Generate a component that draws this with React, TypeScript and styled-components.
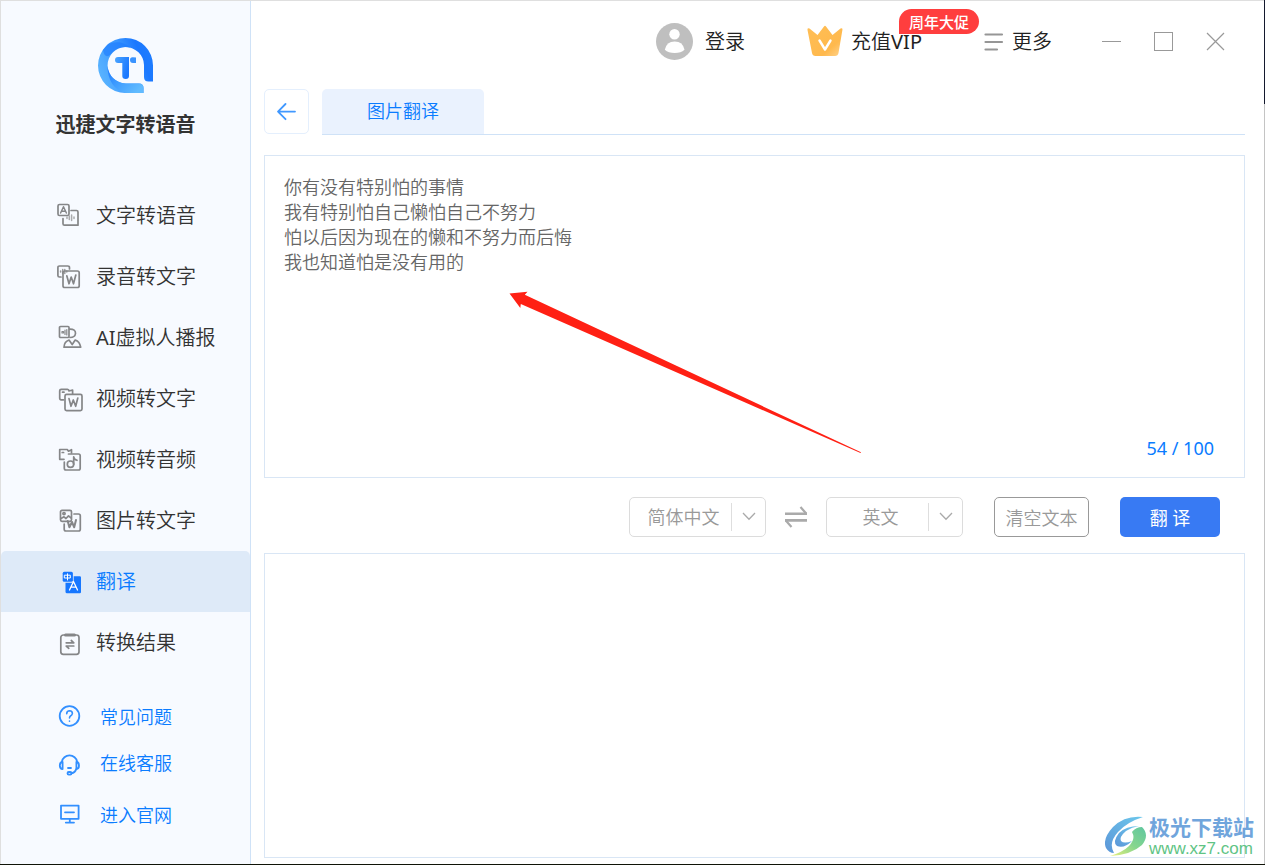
import React from "react";
import styled, { createGlobalStyle, css } from "styled-components";

const GlobalStyle = createGlobalStyle`
  *, *::before, *::after { box-sizing: border-box; }
  body { margin: 0; background: #fff; }
  body, button, select, textarea {
    font-family: "Noto Sans", "Noto Sans CJK SC", sans-serif;
    font-weight: 350;
  }
  button { padding: 0; border: 0; background: none; cursor: pointer; }
  svg { display: block; flex: none; }
`;

/* Window frame: a one pixel edge shows round the sidebar and the content. */
const Frame = styled.div`
  position: relative;
  display: flex;
  min-height: 100vh;
  padding: 1px;
  background:
    linear-gradient(#dfdfdf, #dfdfdf) left top / calc(100% - 1px) 1px no-repeat,
    linear-gradient(#dfdfdf, #dfdfdf) left top / 1px calc(100% - 1px) no-repeat,
    linear-gradient(#14192e 104px, #c4c4c4 104px) right top / 1px calc(100% - 1px) no-repeat,
    #101408;
`;

const Sidebar = styled.aside`
  flex: none;
  width: 250px;
  display: flex;
  flex-direction: column;
  border-right: 1px solid #cfe2f7;
  background: #f7faff;
`;

const Brand = styled.div`
  display: flex;
  flex-direction: column;
  align-items: center;
  gap: 17px;
  height: 184px;
  padding-top: 37px;
`;

const BrandName = styled.h1`
  margin: 0;
  font-size: 20px;
  line-height: 30px;
  font-weight: 700;
  color: #333;
`;

const NavItem = styled.button<{ $active?: boolean }>`
  display: flex;
  align-items: center;
  gap: 13px;
  width: 100%;
  height: 61px;
  padding-left: 56px;
  font-size: 20px;
  line-height: 30px;
  color: #333;
  ${(p) =>
    p.$active &&
    css`
      border-radius: 5px 5px 0 0;
      background: #deeaf8;
      color: #0a7cff;
    `}
`;

const Links = styled.div`
  display: grid;
  grid-template-rows: 46px 46px 58px;
  margin-top: 21px;
`;

const SideLink = styled.a`
  display: flex;
  align-items: center;
  gap: 17px;
  padding-left: 56px;
  font-size: 18px;
  line-height: 26px;
  color: #0a7cff;
  text-decoration: none;
`;

const Main = styled.main`
  flex: 1;
  min-width: 0;
  display: flex;
  flex-direction: column;
  background: #fff;
`;

const Header = styled.header`
  display: flex;
  align-items: center;
  justify-content: flex-end;
  gap: 62px;
  height: 82px;
  padding-right: 38px;
`;

const HeaderButton = styled.button<{ $gap: number }>`
  position: relative;
  display: flex;
  align-items: center;
  gap: ${(p) => p.$gap}px;
  font-size: 20px;
  line-height: 30px;
  color: #222;
`;

const Latin = styled.span`
  font-weight: 400;
`;

const Badge = styled.span`
  position: absolute;
  left: 92px;
  bottom: 25px;
  width: 80px;
  height: 25px;
  border-radius: 13px 13px 13px 0;
  background: #ff3e3e;
  color: #fff;
  font-size: 15px;
  font-weight: 500;
  line-height: 26px;
  text-align: center;
  white-space: nowrap;
`;

const WindowButtons = styled.div`
  display: flex;
  gap: 32px;
  margin-left: -12px;
`;

const TabBar = styled.div`
  display: flex;
  gap: 13px;
  margin: 6px 19px 0 13px;
`;

const BackButton = styled.button`
  display: grid;
  place-items: center;
  width: 45px;
  height: 45px;
  border: 1px solid #e4effd;
  border-radius: 5px;
`;

const TabTrack = styled.div`
  flex: 1;
  border-bottom: 1px solid #cfe2f7;
`;

const Tab = styled.button`
  width: 162px;
  height: 45px;
  padding-bottom: 3px;
  border-radius: 5px 5px 0 0;
  background: #eaf2fe;
  color: #0a7cff;
  font-size: 18px;
`;

const panel = css`
  margin: 0 19px 0 13px;
  border: 1px solid #d9e6f5;
`;

const SourcePanel = styled.section`
  ${panel}
  position: relative;
  display: flex;
  flex-direction: column;
  height: 323px;
  margin-top: 20px;
  padding: 19px 30px 16px 19px;
`;

const TextBox = styled.textarea`
  flex: 1;
  width: 100%;
  padding: 0;
  border: 0;
  outline: 0;
  resize: none;
  background: transparent;
  font-size: 18px;
  line-height: 25px;
  color: #666;
`;

const Counter = styled.output`
  align-self: flex-end;
  font-size: 18px;
  line-height: 26px;
  font-weight: 400;
  color: #0a7cff;
`;

const Arrow = styled.svg`
  position: absolute;
  left: 244px;
  top: 134px;
  pointer-events: none;
`;

const ResultPanel = styled.section`
  ${panel}
  flex: 1;
  display: flex;
  min-height: 160px;
  margin-bottom: 6px;
  padding: 19px;
`;

const Controls = styled.div`
  display: flex;
  align-items: center;
  justify-content: flex-end;
  height: 75px;
  padding: 2px 44px 0 13px;
`;

const SelectWrap = styled.div`
  display: grid;
  grid-template-columns: 102px 34px;
  align-items: center;
  width: 137px;
  height: 40px;
`;

const Select = styled.select`
  grid-area: 1 / 1 / 2 / 3;
  width: 137px;
  height: 40px;
  padding: 0 28px 0 0;
  border: 1px solid #dcdcdc;
  border-radius: 5px;
  appearance: none;
  background: #fff;
  color: #999;
  font-size: 18px;
  text-align: center;
  text-align-last: center;
`;

const SelectMark = styled.span`
  grid-area: 1 / 2 / 2 / 3;
  display: grid;
  place-items: center;
  height: 28px;
  border-left: 1px solid #dedede;
  pointer-events: none;
`;

const SwapButton = styled.button`
  margin: 0 19px;
`;

const ClearButton = styled.button`
  width: 95px;
  height: 40px;
  margin: 0 31px;
  border: 1px solid #999;
  border-radius: 5px;
  color: #999;
  font-size: 18px;
`;

const TranslateButton = styled.button`
  width: 100px;
  height: 40px;
  border-radius: 5px;
  background: #387af3;
  color: #fff;
  font-size: 18px;
  font-weight: 400;
`;

const SiteMark = styled.div`
  position: absolute;
  right: 11px;
  bottom: 7px;
  display: flex;
  align-items: center;
  gap: 2px;
`;

const SiteName = styled.div`
  color: #70a5dc;
  font-size: 21px;
  line-height: 26px;
  font-weight: 700;
`;

const SiteUrl = styled.div`
  color: #5fc485;
  font-family: "Liberation Sans", sans-serif;
  font-size: 17px;
  line-height: 18px;
  font-weight: 400;
`;

const NavSvg = ({ children, active }: { children: React.ReactNode; active?: boolean }) => (
  <svg
    width="26"
    height="26"
    viewBox="0 0 26 26"
    fill="none"
    stroke={active ? "#fff" : "#858688"}
    strokeWidth="1.7"
    strokeLinecap="round"
    strokeLinejoin="round"
    aria-hidden="true"
  >
    {children}
  </svg>
);

const icons = {
  textToVoice: (
    <NavSvg>
      <rect x="1" y="1.5" width="11" height="11" rx="1.5" />
      <path d="M3.6 10 6.5 3.8 9.4 10M4.7 8.2H8.2" strokeWidth="1.5" />
      <path d="M14 7.5H19.5Q21 7.5 21 9V22.2H7.5Q6 22.2 6 20.7V15.5" />
      <path d="M10 14V15.5M12.3 13V16.5M14.6 12V17.5M17 14V15.5" strokeWidth="1.5" stroke="#a9aaac" />
    </NavSvg>
  ),
  voiceToText: (
    <NavSvg>
      <path d="M12.5 5V3.7Q12.5 2 10.8 2H2.5Q.9 2 .9 3.7V11.5Q.9 13 2.5 13H4" />
      <path d="M3.6 7V8M5.7 5.4V9.6M7.8 5.4V9.6M9.8 7V8" strokeWidth="1.5" stroke="#999a9c" />
      <rect x="6" y="7" width="16.2" height="16.5" rx="1.8" />
      <path d="M9.8 11.8 12 19.8 14.2 13 16.5 19.8 18.8 11" />
    </NavSvg>
  ),
  presenter: (
    <NavSvg>
      <rect x="2.5" y="1.5" width="9.5" height="11" rx="1" />
      <path d="M5 6.5H6.5V8H5ZM8 5V9.5M9.8 4.5V10" strokeWidth="1.2" />
      <path d="M12.5 4.2Q18.8 4 18.5 8.5 18 12.5 13 12.5" />
      <path d="M7 22.2Q7.3 16.5 12 15L15.2 19.5 18.2 15Q22.7 16.5 23.7 22.2Z" />
    </NavSvg>
  ),
  videoToText: (
    <NavSvg>
      <path d="M6.5 13.8H4.2Q2.7 13.8 2.7 12.3V4.8Q2.7 3.3 4.2 3.3H10.5Q12 3.3 12 5L15.6 4V8" />
      <path d="M5.5 6.2H7" />
      <rect x="8" y="8.3" width="17" height="16.3" rx="1.6" />
      <path d="M12 12.6 14 20.3 16.3 14 18.7 20.3 20.8 12" />
    </NavSvg>
  ),
  videoToAudio: (
    <NavSvg>
      <path d="M7 12.3H2.7V2.5H10.3L11.5 4.2 14.5 2.7V6" />
      <path d="M5.2 5.5H6.6" />
      <path d="M11.5 7H21.5Q23.2 7 23.2 8.7V21.3Q23.2 23 21.5 23H9Q7.3 23 7.3 21.3V15" />
      <circle cx="13.5" cy="17.2" r="3.2" />
      <path d="M16.7 17.2V9.8Q17 12.5 20 13.3" />
    </NavSvg>
  ),
  imageToText: (
    <NavSvg>
      <rect x="3.5" y="2.3" width="11" height="11" rx="1.5" />
      <circle cx="7" cy="5.6" r="1.1" />
      <path d="M4 10.5 7 8.8 9 10.5 11.5 7.8 14.2 10" />
      <path d="M17 6H21.5Q23.3 6 23.3 7.8V21.3Q23.3 23 21.5 23H9Q7.2 23 7.2 21.3V16" />
      <path d="M10.7 13 12.4 19.3 15 14 17.2 19.3 19 12" strokeWidth="2" />
    </NavSvg>
  ),
  translate: (
    <NavSvg active>
      <rect x="5.7" y="2.7" width="10.2" height="10" rx="1.5" fill="#1677ff" stroke="none" />
      <path d="M10.5 4.8V11M7.7 6.2H13.3V9H7.7Z" strokeWidth="1" />
      <path d="M16.7 7.2H22.8Q24 7.2 24 8.4V23Q24 24.2 22.8 24.2H10Q8.5 24.2 8.5 22.7V13.8H15Q16.7 13.8 16.7 12Z" fill="#1677ff" stroke="none" />
      <path d="M12.5 21 16.5 12.5 20.5 21M14 18.2H19" strokeWidth="1.3" />
    </NavSvg>
  ),
  results: (
    <NavSvg>
      <rect x="3.8" y="5" width="18.2" height="19.3" rx="2.5" />
      <path d="M8.5 5H17.5" strokeWidth="3" />
      <path d="M9.2 12.8H16.8L14.3 10.5M16.8 16H9.2L11.8 18.3" />
    </NavSvg>
  ),
};

const LinkSvg = ({ children }: { children: React.ReactNode }) => (
  <svg width="26" height="26" viewBox="0 0 26 26" fill="none" stroke="#328fff" strokeWidth="1.8" strokeLinecap="round" strokeLinejoin="round" aria-hidden="true">
    {children}
  </svg>
);

const navItems = [
  { label: "文字转语音", icon: icons.textToVoice },
  { label: "录音转文字", icon: icons.voiceToText },
  { latin: "AI", label: "虚拟人播报", icon: icons.presenter },
  { label: "视频转文字", icon: icons.videoToText },
  { label: "视频转音频", icon: icons.videoToAudio },
  { label: "图片转文字", icon: icons.imageToText },
  { label: "翻译", icon: icons.translate, active: true },
  { label: "转换结果", icon: icons.results },
];

const sideLinks = [
  {
    label: "常见问题",
    icon: (
      <LinkSvg>
        <circle cx="12.5" cy="12" r="9.8" />
        <path d="M9.7 9.7Q9.8 6.8 12.6 6.8 15.4 7 15.4 9.5 15.2 11 13.5 12 12.5 12.7 12.5 14M12.5 17V17.2" strokeWidth="1.6" />
      </LinkSvg>
    ),
  },
  {
    label: "在线客服",
    icon: (
      <LinkSvg>
        <path d="M4.8 12A7.8 7.8 0 0 1 20.2 12" />
        <path d="M5.6 12V19Q2.8 19 2.8 15.5 2.8 12 5.6 12ZM19.4 12V19Q22 19 22 15.5 22 12 19.4 12Z" />
        <path d="M19.3 19Q18 22.8 14.5 23.4M11 18H14" />
        <rect x="10.5" y="22" width="4" height="2.6" rx="1.3" />
      </LinkSvg>
    ),
  },
  {
    label: "进入官网",
    icon: (
      <LinkSvg>
        <path d="M4 3.6H21.6V16.8H4ZM8 10.3H17M12.8 16.8V20M8.8 20.6H17" />
      </LinkSvg>
    ),
  },
];

const Logo = () => (
  <svg width="55" height="55" viewBox="0 0 55 55" aria-hidden="true">
    <defs>
      <linearGradient id="ring" x1="0" y1=".7" x2="1" y2=".3">
        <stop offset="0" stopColor="#5bb5ff" />
        <stop offset=".5" stopColor="#3b97ff" />
        <stop offset=".8" stopColor="#1b78ff" />
        <stop offset="1" stopColor="#1f7dff" />
      </linearGradient>
      <linearGradient id="tail" x1="0" y1="0" x2="1" y2=".7">
        <stop offset="0" stopColor="#1b78ff" />
        <stop offset=".45" stopColor="#3d9bff" />
        <stop offset="1" stopColor="#61bbff" />
      </linearGradient>
      <linearGradient id="cap" x1="0" y1="0" x2="1" y2=".5">
        <stop offset="0" stopColor="#4aa5ff" />
        <stop offset="1" stopColor="#1b78ff" />
      </linearGradient>
    </defs>
    <path d="M55 27.5A27.5 27.5 0 1 0 27.5 55H45.5V50Q45.5 45.5 41 45.5H28A18.2 18.2 0 1 1 46 27V39Q46 43.5 50.5 43.5H55Z" fill="url(#ring)" />
    <path d="M9.4 28Q10 50 27.5 55H45.5V50Q45.5 45.5 41 45.5H28Q12 44 9.4 28Z" fill="url(#tail)" />
    <path d="M10 6Q23 1 33 10.2 21 6 13 16 7 22 5 12Z" fill="#1f7dff" opacity=".65" />
    <path d="M20 19H31V38Q31 41 27.7 41 24.3 41 24.3 38V25H20Q17 25 17 22T20 19Z" fill="url(#cap)" />
    <path d="M38 19.5V25H35Q32 25 32 22T35 19.3Z" fill="#3993ff" />
  </svg>
);

const sourceText = `你有没有特别怕的事情
我有特别怕自己懒怕自己不努力
怕以后因为现在的懒和不努力而后悔
我也知道怕是没有用的`;

const LanguageSelect = ({ label, value }: { label: string; value: string }) => (
  <SelectWrap>
    <Select aria-label={label} defaultValue={value}>
      <option>简体中文</option>
      <option>英文</option>
    </Select>
    <SelectMark>
      <svg width="14" height="9" viewBox="0 0 14 9" fill="none" stroke="#aaa" strokeWidth="1.3" aria-hidden="true">
        <path d="M1 1 7 7.3 13 1" />
      </svg>
    </SelectMark>
  </SelectWrap>
);

export default function App() {
  return (
    <>
      <GlobalStyle />
      <Frame>
        <Sidebar>
          <Brand>
            <Logo />
            <BrandName>迅捷文字转语音</BrandName>
          </Brand>
          <nav>
            {navItems.map((item) => (
              <NavItem key={item.label} $active={item.active}>
                {item.icon}
                <span>
                  {item.latin && <Latin>{item.latin}</Latin>}
                  {item.label}
                </span>
              </NavItem>
            ))}
          </nav>
          <Links>
            {sideLinks.map((link) => (
              <SideLink key={link.label} href="#">
                {link.icon}
                {link.label}
              </SideLink>
            ))}
          </Links>
        </Sidebar>

        <Main>
          <Header>
            <HeaderButton $gap={12}>
              <svg width="37" height="38" viewBox="0 0 37 38" aria-hidden="true">
                <circle cx="18.5" cy="18.5" r="18.5" fill="#bfbfbf" />
                <circle cx="18.5" cy="11.2" r="5.2" fill="#fff" />
                <path d="M8.8 26.8Q10.5 18.5 18.7 18.5T28.5 26.8Q25 30 18.7 30T8.8 26.8Z" fill="#fff" />
              </svg>
              登录
            </HeaderButton>
            <HeaderButton $gap={8}>
              <svg width="36" height="34" viewBox="0 0 36 34" aria-hidden="true">
                <defs>
                  <linearGradient id="gold" x1="0" y1="0" x2="1" y2="1">
                    <stop offset="0" stopColor="#ffbe55" />
                    <stop offset=".7" stopColor="#ffb94d" />
                    <stop offset="1" stopColor="#ffd591" />
                  </linearGradient>
                </defs>
                <path d="M.5 5Q0 2.5 2.5 3.5L10.5 10 17 1.5Q18 0 19 1.5L25.5 10 33.5 3.5Q36 2.5 35.4 5L31.5 28Q31 31 28 31H8.5Q5.5 31 5 28Z" fill="url(#gold)" />
                <path d="M12.5 15.5 18 24.5 23.5 15.5" fill="none" stroke="#fff" strokeWidth="2.4" strokeLinecap="round" strokeLinejoin="round" />
              </svg>
              <span>
                充值<Latin>VIP</Latin>
              </span>
              <Badge>周年大促</Badge>
            </HeaderButton>
            <HeaderButton $gap={8}>
              <svg width="20" height="20" viewBox="0 0 20 20" fill="none" stroke="#969696" strokeWidth="2.2" strokeLinecap="round" aria-hidden="true">
                <path d="M1.5 2.5H18M1.5 10H18M1.5 17.5H13" />
              </svg>
              更多
            </HeaderButton>
            <WindowButtons>
              <button aria-label="最小化">
                <svg width="20" height="20" viewBox="0 0 20 20" stroke="#999" aria-hidden="true">
                  <path d="M0 9.5H19" />
                </svg>
              </button>
              <button aria-label="最大化">
                <svg width="20" height="20" viewBox="0 0 20 20" fill="none" stroke="#999" aria-hidden="true">
                  <rect x=".5" y=".5" width="18" height="18" />
                </svg>
              </button>
              <button aria-label="关闭">
                <svg width="20" height="20" viewBox="0 0 20 20" stroke="#999" strokeWidth="1.2" aria-hidden="true">
                  <path d="M1 1 18 18M18 1 1 18" />
                </svg>
              </button>
            </WindowButtons>
          </Header>

          <TabBar>
            <BackButton aria-label="返回">
              <svg width="20" height="18" viewBox="0 0 20 18" fill="none" stroke="#4098ff" strokeWidth="1.8" strokeLinecap="round" strokeLinejoin="round" aria-hidden="true">
                <path d="M8.5 1 1 8.6 8.5 16.2M1 8.6H18" />
              </svg>
            </BackButton>
            <TabTrack>
              <Tab>图片翻译</Tab>
            </TabTrack>
          </TabBar>

          <SourcePanel>
            <TextBox aria-label="原文" defaultValue={sourceText} spellCheck={false} />
            <Counter>54 / 100</Counter>
            <Arrow width="354" height="164" viewBox="0 0 354 164" aria-hidden="true">
              <path d="M.5 3.5 18.5 1.8 15.8 4.8 352 162.3 351.5 163 11.8 14 11.3 18Z" fill="#ff2014" />
            </Arrow>
          </SourcePanel>

          <Controls>
            <LanguageSelect label="源语言" value="简体中文" />
            <SwapButton aria-label="交换语言">
              <svg width="22" height="22" viewBox="0 0 22 22" fill="none" stroke="#aaa" strokeWidth="2.6" aria-hidden="true">
                <path d="M0 7.7H22M0 14.4H22" />
                <path d="M15.5 1 21.3 7.7M.7 14.4 6.5 21" strokeWidth="2.2" />
              </svg>
            </SwapButton>
            <LanguageSelect label="目标语言" value="英文" />
            <ClearButton>清空文本</ClearButton>
            <TranslateButton>翻 译</TranslateButton>
          </Controls>

          <ResultPanel>
            <TextBox aria-label="译文" readOnly />
          </ResultPanel>
        </Main>

        <SiteMark>
          <svg width="42" height="42" viewBox="0 0 42 42" aria-hidden="true">
            <defs>
              <linearGradient id="swirl" x1="0" y1="1" x2="1" y2="0">
                <stop offset="0" stopColor="#5c96d8" />
                <stop offset="1" stopColor="#6cc8ec" />
              </linearGradient>
              <linearGradient id="leaf" x1="0" y1="1" x2="1" y2="0">
                <stop offset="0" stopColor="#e9ef7a" />
                <stop offset=".5" stopColor="#86d68e" />
                <stop offset="1" stopColor="#5fc6a0" />
              </linearGradient>
            </defs>
            <path d="M38 2Q20 0 8 12-3 24 1 33 4 38 9 38 3 28 13 17 22 7 38 2Z" fill="url(#swirl)" />
            <path d="M34 11Q21 11 14 18 7 27 12 31 19 34 27 26 19 29 16 26 14 22 21 16 27 12 34 11Z" fill="url(#swirl)" />
            <path d="M37 12Q45 20 37 30 26 40 5 41 18 37 24 31 31 24 27 17 31 12 37 12Z" fill="url(#leaf)" />
          </svg>
          <div>
            <SiteName>极光下载站</SiteName>
            <SiteUrl>www.xz7.com</SiteUrl>
          </div>
        </SiteMark>
      </Frame>
    </>
  );
}
